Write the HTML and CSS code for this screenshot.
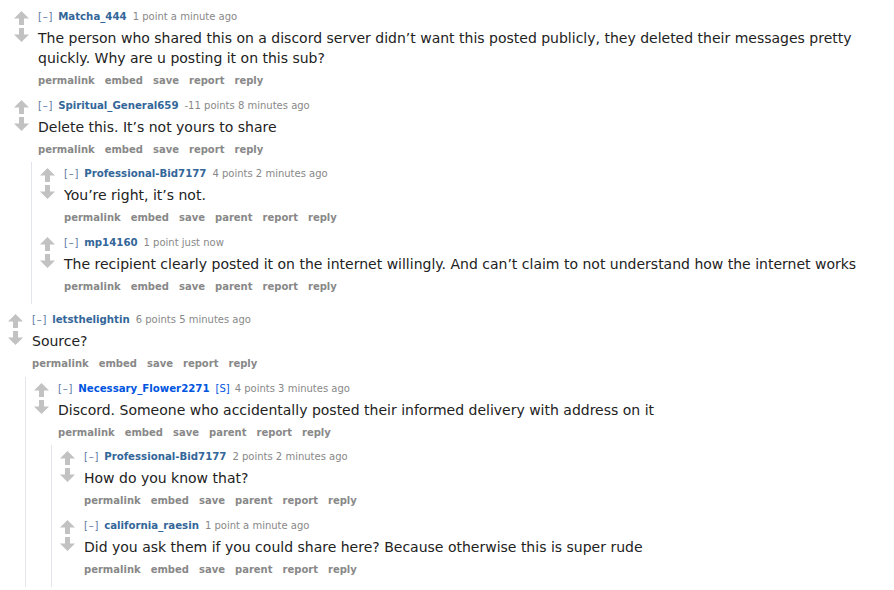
FILE: index.html
```html
<!DOCTYPE html>
<html lang="en">
<head>
    <meta charset="UTF-8">
    <meta name="viewport" content="width=device-width, initial-scale=1.0">
    <title>comments</title>
    <link rel="stylesheet" href="styles.css">
</head>
<body>
    <svg class="sprites" xmlns="http://www.w3.org/2000/svg">
        <symbol id="up" viewBox="0 0 15 14">
            <polygon points="7.5,0 15,7.5 10,7.5 10,14 5,14 5,7.5 0,7.5"/>
        </symbol>
        <symbol id="down" viewBox="0 0 15 14">
            <polygon points="5,0 10,0 10,6.5 15,6.5 7.5,14 0,6.5 5,6.5"/>
        </symbol>
    </svg>

    <div class="thread">
        <div class="group shifted">
            <div class="comment">
                <div class="row">
                    <div class="votes">
                        <svg class="arrow"><use href="#up"/></svg>
                        <svg class="arrow down"><use href="#down"/></svg>
                    </div>
                    <div class="entry">
                        <p class="tagline"><a class="expand">[–]</a><a class="author">Matcha_444</a><span class="score">1 point</span> a minute ago</p>
                        <div class="md">The person who shared this on a discord server didn’t want this posted publicly, they deleted their messages pretty quickly. Why are u posting it on this sub?</div>
                        <ul class="buttons">
                            <li>permalink</li><li>embed</li><li>save</li><li>report</li><li>reply</li>
                        </ul>
                    </div>
                </div>
            </div>

            <div class="comment">
                <div class="row">
                    <div class="votes">
                        <svg class="arrow"><use href="#up"/></svg>
                        <svg class="arrow down"><use href="#down"/></svg>
                    </div>
                    <div class="entry">
                        <p class="tagline"><a class="expand">[–]</a><a class="author">Spiritual_General659</a><span class="score">-11 points</span> 8 minutes ago</p>
                        <div class="md">Delete this. It’s not yours to share</div>
                        <ul class="buttons">
                            <li>permalink</li><li>embed</li><li>save</li><li>report</li><li>reply</li>
                        </ul>
                    </div>
                </div>
                <div class="child">
                    <div class="comment">
                        <div class="row">
                            <div class="votes">
                                <svg class="arrow"><use href="#up"/></svg>
                                <svg class="arrow down"><use href="#down"/></svg>
                            </div>
                            <div class="entry">
                                <p class="tagline"><a class="expand">[–]</a><a class="author">Professional-Bid7177</a><span class="score">4 points</span> 2 minutes ago</p>
                                <div class="md">You’re right, it’s not.</div>
                                <ul class="buttons">
                                    <li>permalink</li><li>embed</li><li>save</li><li>parent</li><li>report</li><li>reply</li>
                                </ul>
                            </div>
                        </div>
                    </div>
                    <div class="comment">
                        <div class="row">
                            <div class="votes">
                                <svg class="arrow"><use href="#up"/></svg>
                                <svg class="arrow down"><use href="#down"/></svg>
                            </div>
                            <div class="entry">
                                <p class="tagline"><a class="expand">[–]</a><a class="author">mp14160</a><span class="score">1 point</span> just now</p>
                                <div class="md">The recipient clearly posted it on the internet willingly. And can’t claim to not understand how the internet works</div>
                                <ul class="buttons">
                                    <li>permalink</li><li>embed</li><li>save</li><li>parent</li><li>report</li><li>reply</li>
                                </ul>
                            </div>
                        </div>
                    </div>
                </div>
            </div>
        </div>

        <div class="group">
            <div class="comment">
                <div class="row">
                    <div class="votes">
                        <svg class="arrow"><use href="#up"/></svg>
                        <svg class="arrow down"><use href="#down"/></svg>
                    </div>
                    <div class="entry">
                        <p class="tagline"><a class="expand">[–]</a><a class="author">letsthelightin</a><span class="score">6 points</span> 5 minutes ago</p>
                        <div class="md">Source?</div>
                        <ul class="buttons">
                            <li>permalink</li><li>embed</li><li>save</li><li>report</li><li>reply</li>
                        </ul>
                    </div>
                </div>
                <div class="child last">
                    <div class="comment">
                        <div class="row">
                            <div class="votes">
                                <svg class="arrow"><use href="#up"/></svg>
                                <svg class="arrow down"><use href="#down"/></svg>
                            </div>
                            <div class="entry">
                                <p class="tagline"><a class="expand">[–]</a><a class="author submitter">Necessary_Flower2271</a><span class="op">[S]</span><span class="score">4 points</span> 3 minutes ago</p>
                                <div class="md">Discord. Someone who accidentally posted their informed delivery with address on it</div>
                                <ul class="buttons">
                                    <li>permalink</li><li>embed</li><li>save</li><li>parent</li><li>report</li><li>reply</li>
                                </ul>
                            </div>
                        </div>
                        <div class="child last">
                            <div class="comment">
                                <div class="row">
                                    <div class="votes">
                                        <svg class="arrow"><use href="#up"/></svg>
                                        <svg class="arrow down"><use href="#down"/></svg>
                                    </div>
                                    <div class="entry">
                                        <p class="tagline"><a class="expand">[–]</a><a class="author">Professional-Bid7177</a><span class="score">2 points</span> 2 minutes ago</p>
                                        <div class="md">How do you know that?</div>
                                        <ul class="buttons">
                                            <li>permalink</li><li>embed</li><li>save</li><li>parent</li><li>report</li><li>reply</li>
                                        </ul>
                                    </div>
                                </div>
                            </div>
                            <div class="comment">
                                <div class="row">
                                    <div class="votes">
                                        <svg class="arrow"><use href="#up"/></svg>
                                        <svg class="arrow down"><use href="#down"/></svg>
                                    </div>
                                    <div class="entry">
                                        <p class="tagline"><a class="expand">[–]</a><a class="author">california_raesin</a><span class="score">1 point</span> a minute ago</p>
                                        <div class="md">Did you ask them if you could share here? Because otherwise this is super rude</div>
                                        <ul class="buttons">
                                            <li>permalink</li><li>embed</li><li>save</li><li>parent</li><li>report</li><li>reply</li>
                                        </ul>
                                    </div>
                                </div>
                            </div>
                        </div>
                    </div>
                </div>
            </div>
        </div>
    </div>
</body>
</html>
```

FILE: styles.css
```css
body {
    margin: 0;
    padding: 10px 16px 0 8px;
    background: #fff;
    color: #222;
    font-family: "DejaVu Sans", Verdana, sans-serif;
}
.sprites {
    display: block;
    width: 0;
    height: 0;
    overflow: hidden;
}
.group.shifted {
    padding-left: 6px;
}
.row {
    display: flex;
}
.votes {
    flex: 0 0 24px;
    display: flex;
    flex-direction: column;
    padding-top: 1px;
}
.arrow {
    width: 15px;
    height: 14px;
    fill: #c2c2c2;
}
.arrow.down {
    margin-top: 3px;
}
.entry {
    flex: 1;
    padding-bottom: 11.5px;
}
.tagline {
    margin: 0;
    height: 14px;
    font-size: 10px;
    line-height: 14px;
    color: #888;
}
.expand {
    color: #5a7aa6;
    letter-spacing: 0.8px;
    margin-right: 5px;
}
.author {
    color: #369;
    font-weight: bold;
    font-size: 10.2px;
    line-height: 1;
    margin-right: 6px;
}
.author.submitter {
    color: #0055df;
}
.op {
    color: #0055df;
    margin-right: 5px;
}
.md {
    margin: 4px 0 0;
    font-size: 14px;
    line-height: 20px;
    color: #222;
}
.buttons {
    list-style: none;
    margin: 7px 0 0;
    padding: 0;
    display: flex;
    gap: 10px;
    font-size: 10px;
    line-height: 12px;
    font-weight: bold;
    color: #888;
}
.child {
    margin: -5px 0 0 17px;
    padding: 5px 0 0 8px;
    border-left: 1px solid #e2e4ee;
}
.group > .comment > .child {
    margin-bottom: 9px;
}
.group > .comment > .child.last {
    margin-bottom: 0;
}
```
